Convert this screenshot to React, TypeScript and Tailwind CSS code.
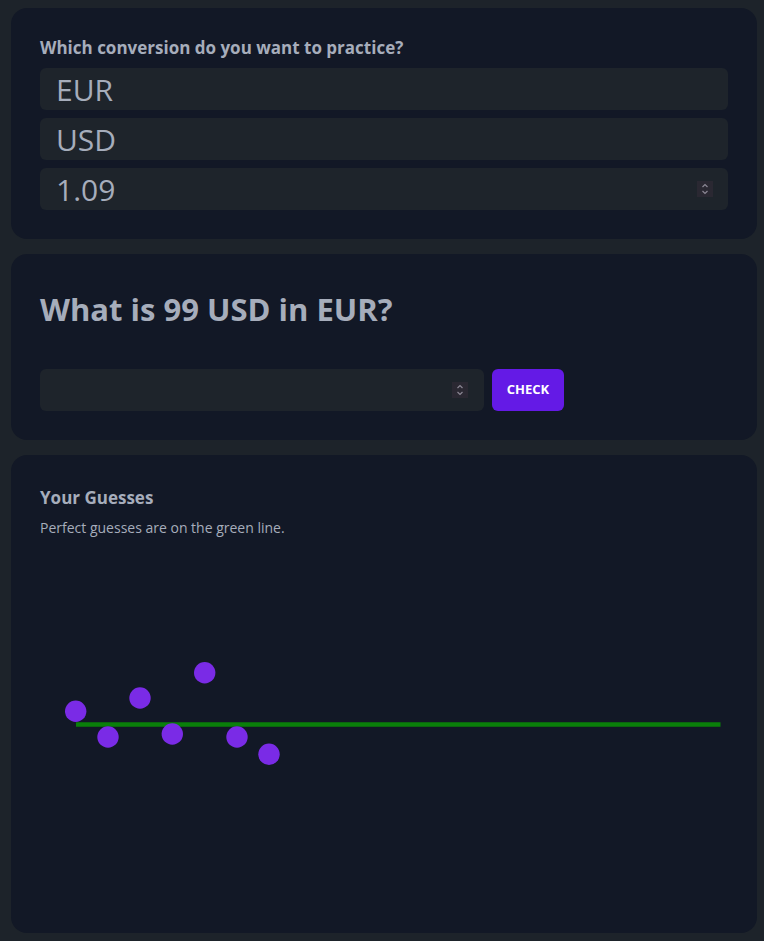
import React from 'react';

const Spinner: React.FC = () => (
  <div className="w-4 h-4 bg-[#2a2832] flex items-center justify-center">
    <svg width="8" height="12" viewBox="0 0 8 12" fill="none" stroke="#8b8794" strokeWidth="1.2">
      <path d="M1.5 4 L4 1.5 L6.5 4" />
      <path d="M1.5 8 L4 10.5 L6.5 8" />
    </svg>
  </div>
);

const guesses = [
  { x: 35.7, y: 166.3 },
  { x: 68, y: 192 },
  { x: 100, y: 153 },
  { x: 132.3, y: 189 },
  { x: 164.7, y: 127.7 },
  { x: 197, y: 192 },
  { x: 229, y: 209.3 },
];

const App: React.FC = () => {
  return (
    <div
      className="h-[941px] overflow-hidden bg-[#1d232a] pl-[11px] pr-[7px] pt-2 pb-[10px] flex flex-col gap-[15px] text-[#a6adbb]"
      style={{ fontFamily: '"Open Sans", "Noto Sans", sans-serif' }}
    >
      {/* Currency settings */}
      <section className="bg-[#121826] rounded-2xl px-[29px] pt-7 pb-[29px] flex flex-col gap-2">
        <h3 className="text-[17px] leading-6 font-bold">Which conversion do you want to practice?</h3>
        <div className="h-[42px] bg-[#1e242b] rounded-md px-4 flex items-center text-[30px]">EUR</div>
        <div className="h-[42px] bg-[#1e242b] rounded-md px-4 flex items-center text-[30px]">USD</div>
        <div className="h-[42px] bg-[#1e242b] rounded-md pl-4 pr-[15px] flex items-center justify-between text-[30px]">
          <span>1.09</span>
          <Spinner />
        </div>
      </section>

      {/* Question */}
      <section className="bg-[#121826] rounded-2xl px-[29px] pt-[37px] pb-[29px]">
        <h2 className="text-[31px] leading-9 font-bold">What is 99 USD in EUR?</h2>
        <div className="mt-[42px] flex gap-2">
          <div className="w-[444px] h-[42px] bg-[#1e242b] rounded-md pr-[16px] flex items-center justify-end">
            <Spinner />
          </div>
          <button className="w-[72px] h-[42px] bg-[#641ae6] rounded-md text-white text-[13px] font-bold">
            CHECK
          </button>
        </div>
      </section>

      {/* Chart */}
      <section className="flex-1 bg-[#121826] rounded-2xl px-[29px] pt-[31px] pb-7 flex flex-col">
        <h3 className="text-[17px] leading-6 font-bold">Your Guesses</h3>
        <p className="mt-2 text-[14px] leading-5">Perfect guesses are on the green line.</p>
        <svg className="mt-[7px]" width="687" height="360" viewBox="0 0 687 360">
          <line x1="36" y1="179.5" x2="680.5" y2="179.5" stroke="#0a7f0a" strokeWidth="4.5" />
          {guesses.map((g, i) => (
            <circle key={i} cx={g.x} cy={g.y} r="10.7" fill="#7a2be6" />
          ))}
        </svg>
      </section>
    </div>
  );
};

export default App;
